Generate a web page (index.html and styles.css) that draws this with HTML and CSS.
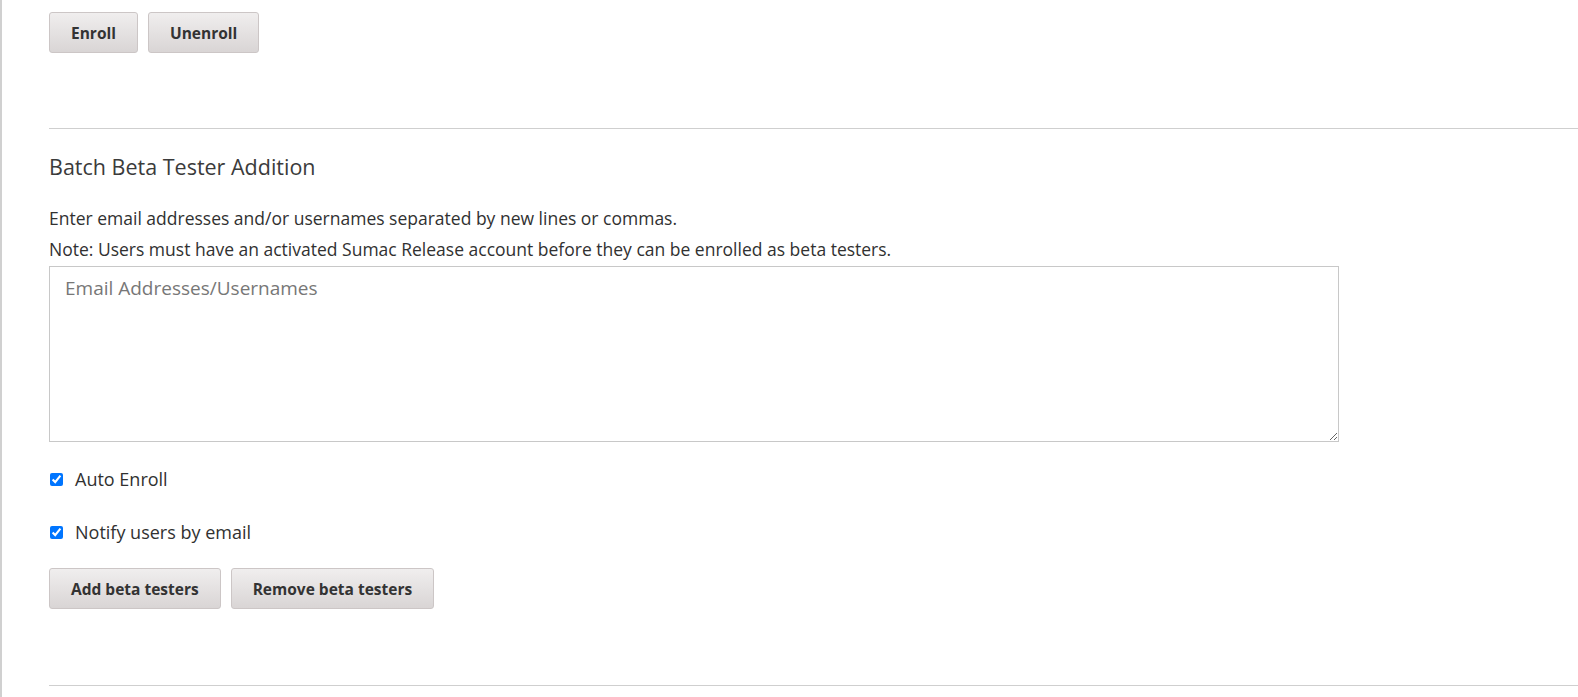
FILE: index.html
```html
<!DOCTYPE html>
<html lang="en">
<head>
<meta charset="UTF-8" />
<title>Beta Testers</title>
<link rel="stylesheet" href="styles.css">
</head>
<body>

<div class="pagina">
  <div class="acoes acoes-topo">
    <button class="botao">Enroll</button>
    <button class="botao">Unenroll</button>
  </div>

  <hr class="divisor" />

  <div class="lote">
    <h2>Batch Beta Tester Addition</h2>
    <p>Enter email addresses and/or usernames separated by new lines or commas.</p>
    <p class="nota">Note: Users must have an activated Sumac Release account before they can be enrolled as beta testers.</p>
    <textarea class="emails" placeholder="Email Addresses/Usernames"></textarea>

    <label class="opcao"><input type="checkbox" checked /> Auto Enroll</label>
    <label class="opcao"><input type="checkbox" checked /> Notify users by email</label>

    <div class="acoes">
      <button class="botao">Add beta testers</button>
      <button class="botao">Remove beta testers</button>
    </div>
  </div>

  <hr class="divisor divisor-fim" />
</div>

</body>
</html>
```

FILE: styles.css
```css
body {
  margin: 0;
  padding: 0;
  background: #fff;
  font-family: "Open Sans", "Noto Sans", sans-serif;
  color: #313131;
  font-size: 16px;
  overflow: hidden;
}

.pagina {
  border-left: 2px solid #d0d0d0;
  min-height: 697px;
  padding-left: 47px;
  box-sizing: border-box;
}

.acoes {
  display: flex;
  gap: 10px;
}

.acoes-topo {
  padding-top: 12px;
}

.botao {
  font-family: "Open Sans", "Noto Sans", sans-serif;
  font-weight: bold;
  font-size: 15.5px;
  color: #333;
  height: 41px;
  padding: 0 21px;
  border: 1px solid #ccc6c6;
  border-radius: 3px;
  background: linear-gradient(#f0eeee, #d9d5d5);
  cursor: pointer;
}

.divisor {
  border: 0;
  border-top: 1px solid #cfcfcf;
  margin: 75px 0 0;
}

.lote h2 {
  font-weight: normal;
  font-size: 21.5px;
  color: #3b3b3b;
  margin: 23px 0 25px;
}

.lote p {
  margin: 0 0 7px;
  font-size: 17.5px;
  line-height: 24px;
}

.lote p.nota {
  margin-bottom: 5px;
}

.emails {
  display: block;
  width: 1290px;
  height: 176px;
  box-sizing: border-box;
  margin: 0;
  padding: 8px 15px;
  border: 1px solid #c8c8c8;
  font-family: "Open Sans", "Noto Sans", sans-serif;
  font-size: 19px;
  color: #333;
}

.emails::placeholder {
  color: #777;
}

.opcao {
  display: flex;
  align-items: center;
  gap: 12px;
  margin-top: 24px;
  font-size: 18px;
  line-height: 27px;
}

.opcao + .opcao {
  margin-top: 26px;
}

.opcao input {
  margin: 0 0 0 1px;
  width: 13px;
  height: 13px;
}

.lote .acoes {
  margin-top: 22px;
}

.divisor-fim {
  margin-top: 76px;
}
```
